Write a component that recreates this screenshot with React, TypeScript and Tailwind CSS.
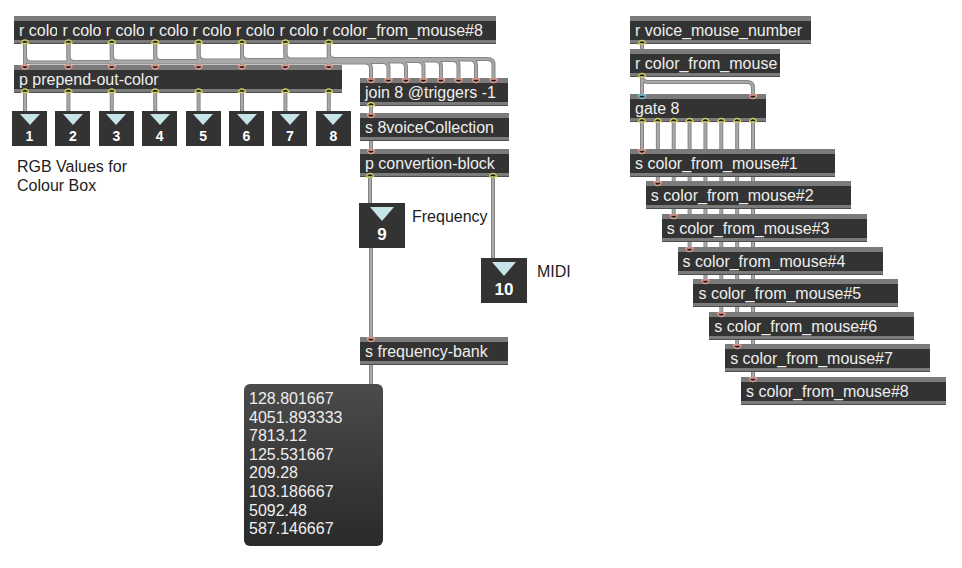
import React from 'react';

// Max patcher canvas: every node sits at its patch coordinate
const topOut = (i: number) => 25 + 43.4 * i;
const joinIn = (j: number) => 371 + 17.5 * j;
const sendX = (k: number) => 630 + 15.86 * k;
const gateOut = (k: number) => 642 + 15.86 * k;
const sendY = [149, 181, 214, 247, 279, 312, 344, 377];
const numbersY = 111;

type ObjProps = { x: number; y: number; w: number; text: string };

function Obj({ x, y, w, text }: ObjProps) {
  return (
    <div className="absolute flex h-[28px] flex-col overflow-hidden" style={{ left: x, top: y, width: w }}>
      <div className="h-[5px] bg-[#7b7b7b]" />
      <div className="h-[19px] overflow-hidden whitespace-nowrap bg-[#333333] pl-[5px] text-[16px] leading-[19px] text-[#eeeeee]">
        {text}
      </div>
      <div className="h-[3px] bg-[#7b7b7b]" />
      <div className="h-px bg-[#4d4d4d]" />
    </div>
  );
}

function SmallNumber({ x, label }: { x: number; label: string }) {
  return (
    <div
      className="absolute flex h-[35px] w-[35px] flex-col items-center bg-[#333333] pt-[3px]"
      style={{ left: x, top: numbersY }}
    >
      <div className="h-0 w-0 border-x-[10px] border-t-[11px] border-x-transparent border-t-[#c7e4e9]" />
      <div className="mt-[2px] text-[14px] font-bold leading-[18px] text-white">{label}</div>
    </div>
  );
}

function BigNumber({ x, y, label }: { x: number; y: number; label: string }) {
  return (
    <div
      className="absolute flex h-[45px] w-[46px] flex-col items-center bg-[#333333] pt-[4px]"
      style={{ left: x, top: y }}
    >
      <div className="h-0 w-0 border-x-[12px] border-t-[14px] border-x-transparent border-t-[#c7e4e9]" />
      <div className="mt-[3px] text-[17px] font-bold leading-[22px] text-white">{label}</div>
    </div>
  );
}

const seg = (x1: number, y1: number, x2: number, y2: number, yh: number, r = 6) => {
  const d = x2 > x1 ? r : -r;
  return `M${x1} ${y1} L${x1} ${yh - r} Q${x1} ${yh} ${x1 + d} ${yh} L${x2 - d} ${yh} Q${x2} ${yh} ${x2} ${yh + r} L${x2} ${y2}`;
};
const line = (x: number, y1: number, y2: number) => `M${x} ${y1} L${x} ${y2}`;

const cords: string[] = [
  ...Array.from({ length: 8 }, (_, i) => line(topOut(i), 43, 66)),
  ...Array.from({ length: 8 }, (_, i) => seg(topOut(i), 43, joinIn(i), 79, 62.5 - i * 0.5)),
  ...Array.from({ length: 8 }, (_, i) => line(topOut(i), 92, numbersY + 2)),
  line(371, 106, 150),
  line(370, 177, 204),
  line(493, 177, 260),
  line(371, 247, 386),
  line(642, 44, 95),
  seg(642, 76, 753, 95, 82),
  ...Array.from({ length: 8 }, (_, k) => line(gateOut(k), 121, sendY[k] + 1)),
];

type Port = { x: number; y: number; c: string };
const Y = '#cfcf62';
const P = '#e79d8d';
const C = '#79c7d8';

const outlets: Port[] = [
  ...Array.from({ length: 8 }, (_, i) => ({ x: topOut(i), y: 43.5, c: Y })),
  ...Array.from({ length: 8 }, (_, i) => ({ x: topOut(i), y: 92.5, c: Y })),
  { x: 371, y: 106, c: Y },
  { x: 370, y: 177, c: Y },
  { x: 493, y: 177, c: Y },
  { x: 642, y: 44, c: Y },
  { x: 642, y: 77, c: Y },
  ...Array.from({ length: 8 }, (_, k) => ({ x: gateOut(k), y: 122, c: Y })),
];

const inlets: Port[] = [
  ...Array.from({ length: 8 }, (_, i) => ({ x: topOut(i), y: 65.5, c: P })),
  ...Array.from({ length: 8 }, (_, j) => ({ x: joinIn(j), y: 79, c: P })),
  { x: 371, y: 114, c: P },
  { x: 371, y: 150, c: P },
  { x: 371, y: 338, c: P },
  { x: 642, y: 95, c: C },
  { x: 753, y: 95, c: P },
  ...Array.from({ length: 8 }, (_, k) => ({ x: sendX(k) + 12, y: sendY[k] + 1, c: P })),
];

const values = [
  '128.801667',
  '4051.893333',
  '7813.12',
  '125.531667',
  '209.28',
  '103.186667',
  '5092.48',
  '587.146667',
];

export default function App() {
  return (
    <div className="relative h-[568px] w-[962px] overflow-hidden bg-white font-['Liberation_Sans',Arial,sans-serif]">
      <svg className="absolute inset-0" width={962} height={568}>
        {cords.map((d, i) => (
          <path key={`o${i}`} d={d} fill="none" stroke="#858585" strokeWidth={4} />
        ))}
        {cords.map((d, i) => (
          <path key={`i${i}`} d={d} fill="none" stroke="#a9a9a9" strokeWidth={2} />
        ))}
      </svg>

      {/* receive row */}
      {Array.from({ length: 7 }, (_, i) => (
        <Obj key={i} x={14 + 43.4 * i} y={16} w={43.4} text={`r color_from_mouse#${i + 1}`} />
      ))}
      <Obj x={317.8} y={16} w={178} text="r color_from_mouse#8" />

      <Obj x={14} y={65} w={328} text="p prepend-out-color" />
      {Array.from({ length: 8 }, (_, i) => (
        <SmallNumber key={i} x={12 + 43.4 * i} label={`${i + 1}`} />
      ))}

      <div className="absolute left-[17px] top-[157px] text-[16px] leading-[19px] text-[#1c1c1c]">
        RGB Values for
        <br />
        Colour Box
      </div>

      <Obj x={360} y={78} w={148} text="join 8 @triggers -1" />
      <Obj x={360} y={113} w={149} text="s 8voiceCollection" />
      <Obj x={360} y={149} w={149} text="p convertion-block" />

      <BigNumber x={359} y={203} label="9" />
      <div className="absolute left-[412px] top-[207px] text-[16px] leading-[19px] text-[#1c1c1c]">Frequency</div>
      <BigNumber x={481} y={258} label="10" />
      <div className="absolute left-[537px] top-[262px] text-[16px] leading-[19px] text-[#1c1c1c]">MIDI</div>

      <Obj x={360} y={337} w={148} text="s frequency-bank" />

      <div className="absolute left-[244px] top-[384px] h-[162px] w-[139px] rounded-[6px] bg-linear-to-b from-[#4b4b4b] to-[#2a2a2a] pl-[5px] pt-[6px] text-[16px] leading-[18.6px] text-[#eeeeee]">
        {values.map((v) => (
          <div key={v}>{v}</div>
        ))}
      </div>

      {/* voice router */}
      <Obj x={630} y={16} w={181} text="r voice_mouse_number" />
      <Obj x={630} y={49} w={150} text="r color_from_mouse" />
      <Obj x={630} y={94} w={136} text="gate 8" />
      {sendY.map((y, k) => (
        <Obj key={k} x={sendX(k)} y={y} w={205} text={`s color_from_mouse#${k + 1}`} />
      ))}

      <svg className="pointer-events-none absolute inset-0" width={962} height={568}>
        {outlets.map((p, i) => (
          <path
            key={`out${i}`}
            d={`M${p.x - 3.5} ${p.y} A3.5 3.5 0 0 1 ${p.x + 3.5} ${p.y} Z`}
            fill="#1f1f1f"
            stroke={p.c}
            strokeWidth={1.4}
          />
        ))}
        {inlets.map((p, i) => (
          <path
            key={`in${i}`}
            d={`M${p.x - 3.5} ${p.y} A3.5 3.5 0 0 0 ${p.x + 3.5} ${p.y} Z`}
            fill="#1f1f1f"
            stroke={p.c}
            strokeWidth={1.4}
          />
        ))}
      </svg>
    </div>
  );
}
